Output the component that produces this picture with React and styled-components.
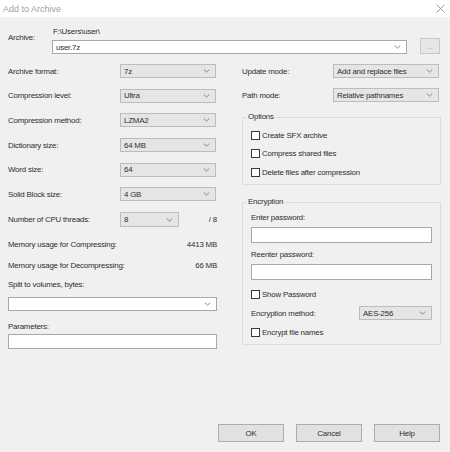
import React from 'react';
import styled, { createGlobalStyle } from 'styled-components';

const Global = createGlobalStyle`
  html, body { margin: 0; padding: 0; background: #f0f0f0; }
`;

const Dialog = styled.div`
  width: 450px;
  height: 452px;
  background: #f0f0f0;
  display: flex;
  flex-direction: column;
  font-family: "Liberation Sans", Arial, sans-serif;
  font-size: 7.9px;
  letter-spacing: -0.2px;
  color: #2e2e2e;
  overflow: hidden;
`;

const TitleBar = styled.div`
  height: 17px;
  flex: none;
  background: #fff;
  display: flex;
  align-items: center;
  justify-content: space-between;
  padding: 0 5px 0 3px;
  box-sizing: border-box;
`;

const Title = styled.span`
  font-size: 9px;
  letter-spacing: 0;
  color: #a0a0a0;
`;

const Body = styled.div`
  flex: 1;
  display: flex;
  flex-direction: column;
  padding: 0 9px 10px 8px;
`;

const ArchiveRow = styled.div`
  display: flex;
  align-items: flex-start;
  margin-top: 10px;
`;

const ArchiveLabel = styled.div`
  width: 44px;
  line-height: 10px;
  margin-top: 6px;
`;

const PathCol = styled.div`
  display: flex;
  flex-direction: column;
  gap: 3px;
`;

const PathText = styled.div`
  line-height: 10px;
  padding-left: 1px;
`;

const BrowseButton = styled.div`
  width: 20px;
  height: 16px;
  box-sizing: border-box;
  margin: 11px 0 0 13px;
  border: 1px solid #c8c8c8;
  background: #e6e6e6;
  color: #a8a8a8;
  display: flex;
  align-items: center;
  justify-content: center;
  font-size: 7px;
`;

const ComboBox = styled.div`
  width: ${p => p.$w}px;
  height: ${p => p.$h || 14}px;
  flex: none;
  box-sizing: border-box;
  border: 1px solid ${p => (p.$edit ? '#a8a8a8' : '#bcbcbc')};
  background: ${p => (p.$edit ? '#ffffff' : '#e5e5e5')};
  display: flex;
  align-items: center;
  justify-content: space-between;
  padding: 0 5px 0 3px;
`;

const Chevron = () => (
  <svg width="7" height="4" viewBox="0 0 7 4">
    <polyline points="0.8,0.6 3.5,3.2 6.2,0.6" fill="none" stroke="#7a7a7a" strokeWidth="0.9" />
  </svg>
);

const Combo = ({ value, w, h, edit, arrow = true }) => (
  <ComboBox $w={w} $h={h} $edit={edit}>
    <span>{value}</span>
    {arrow && <Chevron />}
  </ComboBox>
);

const Columns = styled.div`
  display: flex;
  justify-content: space-between;
  margin-top: 10px;
`;

const LeftCol = styled.div`
  width: 209px;
  display: flex;
  flex-direction: column;
`;

const RightCol = styled.div`
  width: 199px;
  display: flex;
  flex-direction: column;
`;

const Stack = styled.div`
  display: flex;
  flex-direction: column;
  gap: ${p => p.$gap}px;
`;

const FieldRow = styled.div`
  display: flex;
  align-items: center;
  height: ${p => p.$h || 14}px;
  margin-top: ${p => p.$mt || 0}px;
`;

const FieldLabel = styled.span`
  width: ${p => p.$w}px;
  flex: none;
`;

const ThreadMax = styled.span`
  flex: 1;
  text-align: right;
`;

const InfoRow = styled.div`
  display: flex;
  justify-content: space-between;
  line-height: 12px;
  margin-top: ${p => p.$mt}px;
`;

const Caption = styled.div`
  line-height: 10px;
  margin-top: ${p => p.$mt}px;
  margin-bottom: ${p => p.$mb}px;
`;

const TextBox = styled.div`
  height: ${p => p.$h}px;
  box-sizing: border-box;
  border: 1px solid #a8a8a8;
  background: #fff;
`;

const Group = styled.fieldset`
  margin: ${p => p.$mt}px 0 0;
  padding: ${p => p.$pt}px 8px 7px 8px;
  border: 1px solid #dcdcdc;
  min-width: 0;
  display: flex;
  flex-direction: column;
`;

const Legend = styled.legend`
  padding: 0 2px;
  margin-left: -5px;
  line-height: 10px;
`;

const CheckRow = styled.label`
  display: flex;
  align-items: center;
  gap: 2px;
  height: 10px;
  margin-top: ${p => p.$mt || 0}px;
`;

const CheckBox = styled.span`
  width: 9px;
  height: 9px;
  box-sizing: border-box;
  border: 1px solid #3a3a3a;
  background: #fff;
  flex: none;
`;

const Check = ({ children, mt }) => (
  <CheckRow $mt={mt}>
    <CheckBox />
    <span>{children}</span>
  </CheckRow>
);

const Footer = styled.div`
  margin-top: auto;
  margin-right: 1px;
  display: flex;
  justify-content: flex-end;
  gap: 12px;
`;

const Button = styled.div`
  width: 66px;
  height: 18px;
  box-sizing: border-box;
  border: 1px solid #adadad;
  background: #e1e1e1;
  display: flex;
  align-items: center;
  justify-content: center;
`;

const leftFields = [
  ['Archive format:', '7z'],
  ['Compression level:', 'Ultra'],
  ['Compression method:', 'LZMA2'],
  ['Dictionary size:', '64 MB'],
  ['Word size:', '64'],
  ['Solid Block size:', '4 GB'],
];

export default function App() {
  return (
    <Dialog>
      <Global />
      <TitleBar>
        <Title>Add to Archive</Title>
        <svg width="9" height="9" viewBox="0 0 9 9">
          <path d="M0.5 0.5 L8.5 8.5 M8.5 0.5 L0.5 8.5" stroke="#8a8a8a" strokeWidth="0.8" />
        </svg>
      </TitleBar>
      <Body>
        <ArchiveRow>
          <ArchiveLabel>Archive:</ArchiveLabel>
          <PathCol>
            <PathText>F:\Users\user\</PathText>
            <Combo value="user.7z" w={355} edit />
          </PathCol>
          <BrowseButton>...</BrowseButton>
        </ArchiveRow>

        <Columns>
          <LeftCol>
            <Stack $gap={10.7}>
              {leftFields.map(([label, value]) => (
                <FieldRow key={label}>
                  <FieldLabel $w={112}>{label}</FieldLabel>
                  <Combo value={value} w={96} />
                </FieldRow>
              ))}
              <FieldRow $h={15}>
                <FieldLabel $w={112}>Number of CPU threads:</FieldLabel>
                <Combo value="8" w={59} h={15} />
                <ThreadMax>/ 8</ThreadMax>
              </FieldRow>
            </Stack>
            <InfoRow $mt={12}>
              <span>Memory usage for Compressing:</span>
              <span>4413 MB</span>
            </InfoRow>
            <InfoRow $mt={9}>
              <span>Memory usage for Decompressing:</span>
              <span>66 MB</span>
            </InfoRow>
            <Caption $mt={8} $mb={7}>Split to volumes, bytes:</Caption>
            <Combo value="" w={209} edit />
            <Caption $mt={11} $mb={2}>Parameters:</Caption>
            <TextBox $h={15} />
          </LeftCol>

          <RightCol>
            <Stack $gap={10}>
              <FieldRow>
                <FieldLabel $w={91}>Update mode:</FieldLabel>
                <Combo value="Add and replace files" w={106} />
              </FieldRow>
              <FieldRow>
                <FieldLabel $w={91}>Path mode:</FieldLabel>
                <Combo value="Relative pathnames" w={106} />
              </FieldRow>
            </Stack>

            <Group $mt={10} $pt={8}>
              <Legend>Options</Legend>
              <Check>Create SFX archive</Check>
              <Check mt={8.5}>Compress shared files</Check>
              <Check mt={8.5}>Delete files after compression</Check>
            </Group>

            <Group $mt={12} $pt={6}>
              <Legend>Encryption</Legend>
              <Caption $mt={0} $mb={4}>Enter password:</Caption>
              <TextBox $h={16} />
              <Caption $mt={7} $mb={4}>Reenter password:</Caption>
              <TextBox $h={16} />
              <Check mt={9}>Show Password</Check>
              <FieldRow $mt={7}>
                <FieldLabel $w={108}>Encryption method:</FieldLabel>
                <Combo value="AES-256" w={73} />
              </FieldRow>
              <Check mt={7}>Encrypt file names</Check>
            </Group>
          </RightCol>
        </Columns>

        <Footer>
          <Button>OK</Button>
          <Button>Cancel</Button>
          <Button>Help</Button>
        </Footer>
      </Body>
    </Dialog>
  );
}
